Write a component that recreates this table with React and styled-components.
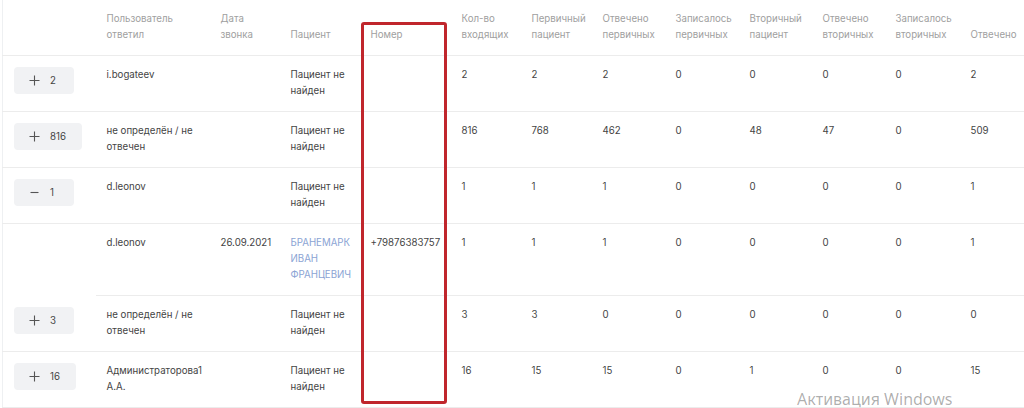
import React from "react";
import styled, { createGlobalStyle } from "styled-components";

const Global = createGlobalStyle`
  html, body { margin: 0; padding: 0; background: #fff; }
  body { font-family: Inter, "Noto Sans", sans-serif; }
`;

const Page = styled.div`
  position: relative;
  width: 1024px;
  height: 408px;
  overflow: hidden;
  background: #fff;
`;

const Table = styled.table`
  margin-left: 2px;
  border-left: 1px solid #eef0f2;
  border-collapse: collapse;
  table-layout: fixed;
  width: ${(p) => p.$width}px;
  font-size: 9.7px;
  line-height: 16px;
`;

const Th = styled.th`
  text-align: left;
  vertical-align: bottom;
  font-weight: 400;
  color: #a0a0a0;
  padding: 11px 4px 12px 11px;
  border-bottom: 1px solid #ececec;
`;

const Td = styled.td`
  vertical-align: top;
  color: #444;
  padding: 11px 4px 12px 11px;
  border-bottom: ${(p) => (p.$noBorder ? "none" : "1px solid #ececec")};
  overflow-wrap: break-word;
`;

const ToggleCell = styled.td`
  vertical-align: top;
  padding: 11px 0 0 11px;
  border-bottom: ${(p) => (p.$noBorder ? "none" : "1px solid #ececec")};
`;

const Toggle = styled.button`
  display: inline-flex;
  align-items: center;
  gap: 10px;
  height: 27px;
  min-width: 60px;
  padding: 0 16px 0 15px;
  border: none;
  border-radius: 4px;
  background: #f1f2f4;
  color: #444;
  font-family: inherit;
  font-size: 9.7px;
  cursor: pointer;
`;

const Link = styled.span`
  color: #8ba4d4;
`;

const Highlight = styled.div`
  position: absolute;
  left: 361px;
  top: 22px;
  width: 80px;
  height: 376px;
  border: 3px solid #c0262c;
  border-radius: 3px;
  pointer-events: none;
`;

const Watermark = styled.div`
  position: absolute;
  left: 797px;
  top: 388px;
  font-family: "Noto Sans", "Open Sans", sans-serif;
  font-size: 16px;
  line-height: 22px;
  color: rgba(0, 0, 0, 0.33);
  white-space: nowrap;
  pointer-events: none;
`;

const PlusIcon = () => (
  <svg width="11" height="11" viewBox="0 0 11 11">
    <path d="M5.5 0.5v10M0.5 5.5h10" stroke="#555" strokeWidth="1.1" fill="none" />
  </svg>
);

const MinusIcon = () => (
  <svg width="11" height="11" viewBox="0 0 11 11">
    <path d="M1.5 5.5h8" stroke="#555" strokeWidth="1.1" fill="none" />
  </svg>
);

const widths = [93, 114, 70, 80, 91, 70, 71, 73, 74, 73, 73, 75, 80];
const totalWidth = widths.reduce((a, b) => a + b, 0);

const headers = [
  "",
  "Пользователь ответил",
  "Дата звонка",
  "Пациент",
  "Номер",
  "Кол-во входящих",
  "Первичный пациент",
  "Отвечено первичных",
  "Записалось первичных",
  "Вторичный пациент",
  "Отвечено вторичных",
  "Записалось вторичных",
  "Отвечено",
];

const rows = [
  { toggle: "+", count: 2, user: "i.bogateev", date: "", patient: "Пациент не найден", phone: "", nums: [2, 2, 2, 0, 0, 0, 0, 2] },
  { toggle: "+", count: 816, user: "не определён / не отвечен", date: "", patient: "Пациент не найден", phone: "", nums: [816, 768, 462, 0, 48, 47, 0, 509] },
  { toggle: "-", count: 1, user: "d.leonov", date: "", patient: "Пациент не найден", phone: "", nums: [1, 1, 1, 0, 0, 0, 0, 1] },
  { child: true, user: "d.leonov", date: "26.09.2021", patient: "БРАНЕМАРК ИВАН ФРАНЦЕВИЧ", link: true, phone: "+79876383757", nums: [1, 1, 1, 0, 0, 0, 0, 1] },
  { toggle: "+", count: 3, user: "не определён / не отвечен", date: "", patient: "Пациент не найден", phone: "", nums: [3, 3, 0, 0, 0, 0, 0, 0] },
  { toggle: "+", count: 16, user: "Администраторова1 А.А.", date: "", patient: "Пациент не найден", phone: "", nums: [16, 15, 15, 0, 1, 0, 0, 15] },
];

export default function App() {
  return (
    <Page>
      <Global />
      <Table $width={totalWidth}>
        <colgroup>
          {widths.map((w, i) => (
            <col key={i} style={{ width: w }} />
          ))}
        </colgroup>
        <thead>
          <tr>
            {headers.map((h, i) => (
              <Th key={i}>{h}</Th>
            ))}
          </tr>
        </thead>
        <tbody>
          {rows.map((r, i) => (
            <tr key={i}>
              <ToggleCell $noBorder={r.child}>
                {!r.child && (
                  <Toggle>
                    {r.toggle === "+" ? <PlusIcon /> : <MinusIcon />}
                    <span>{r.count}</span>
                  </Toggle>
                )}
              </ToggleCell>
              <Td>{r.user}</Td>
              <Td>{r.date}</Td>
              <Td>{r.link ? <Link>{r.patient}</Link> : r.patient}</Td>
              <Td>{r.phone}</Td>
              {r.nums.map((n, j) => (
                <Td key={j}>{n}</Td>
              ))}
            </tr>
          ))}
        </tbody>
      </Table>
      <Highlight />
      <Watermark>Активация Windows</Watermark>
    </Page>
  );
}
